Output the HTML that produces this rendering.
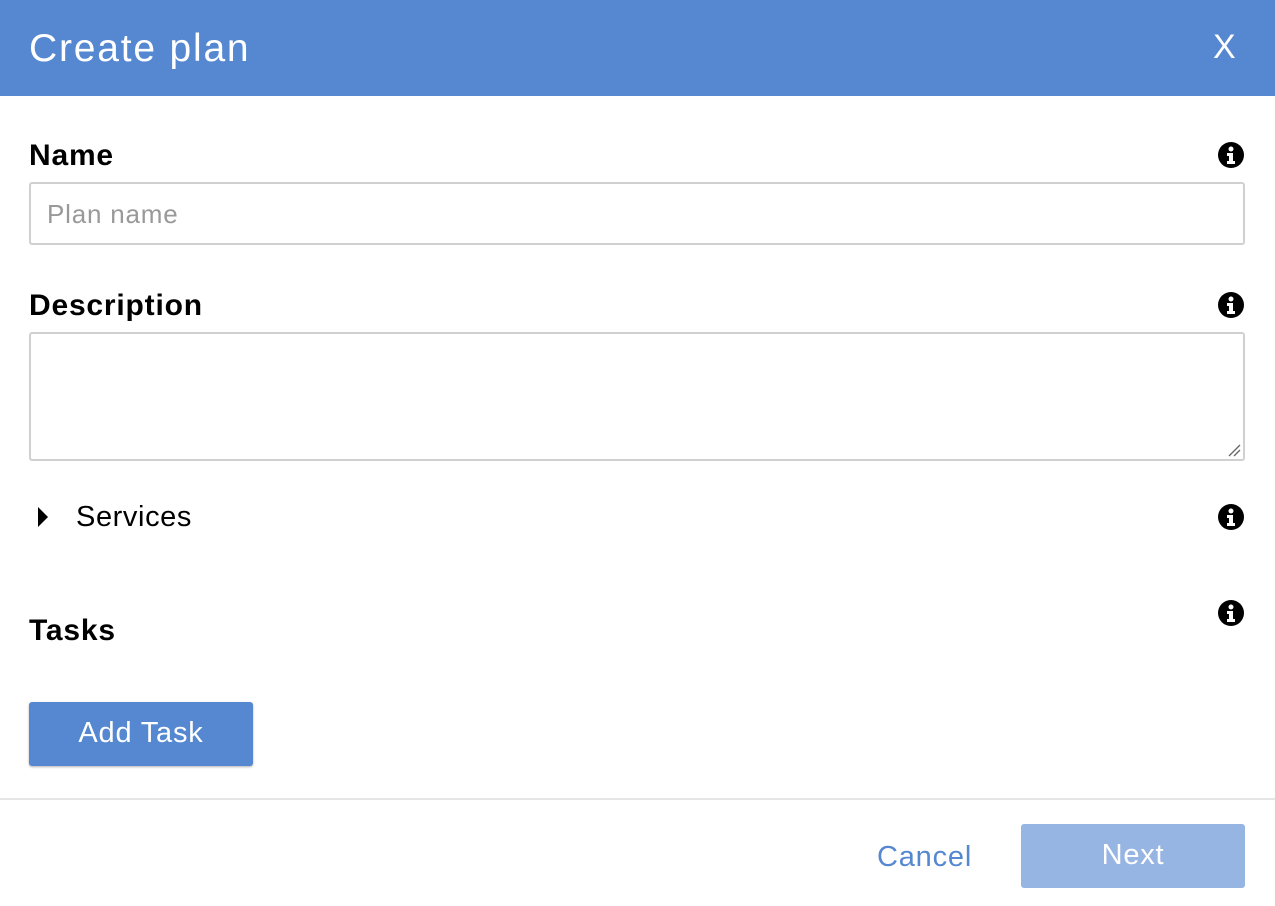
<!DOCTYPE html>
<html><head><style>
*{box-sizing:border-box;margin:0;padding:0}
body{width:1275px;height:906px;background:#fff;font-family:"Liberation Sans",sans-serif;position:relative;overflow:hidden}
.hdr{position:absolute;left:0;top:0;width:1275px;height:96px;background:#5588d0;color:#fff}
.hdr .t{position:absolute;left:29px;top:27px;font-size:39px;letter-spacing:1.8px}
.hdr .x{position:absolute;left:1213px;top:28px;font-size:34px}
.lbl{position:absolute;left:29px;font-size:30px;color:#000;font-weight:600;letter-spacing:0.8px}
.box{position:absolute;left:29px;width:1216px;border:2px solid #d0d0d0;border-radius:3px}
.info{position:absolute;left:1218px;width:26px;height:26px}
.btn{position:absolute;height:64px;width:224px;color:#fff;font-size:29px;text-align:center;line-height:62px;border-radius:3px;letter-spacing:0.8px}
</style></head><body>
<div class="hdr"><div class="t">Create plan</div><div class="x">X</div></div>
<div class="lbl" style="top:139px">Name</div>
<svg class="info" style="top:142px" viewBox="0 0 26 26"><circle cx="13" cy="13" r="13"/><circle cx="13" cy="7" r="2.5" fill="#fff"/><path d="M9 11h6v8h2v3H9v-3h2v-5H9z" fill="#fff"/></svg>
<div class="box" style="top:182px;height:63px"><span style="position:absolute;left:16px;top:15px;font-size:26px;color:#999;letter-spacing:0.8px">Plan name</span></div>
<div class="lbl" style="top:289px">Description</div>
<svg class="info" style="top:292px" viewBox="0 0 26 26"><circle cx="13" cy="13" r="13"/><circle cx="13" cy="7" r="2.5" fill="#fff"/><path d="M9 11h6v8h2v3H9v-3h2v-5H9z" fill="#fff"/></svg>
<div class="box" style="top:332px;height:129px"><svg style="position:absolute;right:2px;bottom:2px" width="14" height="14"><path d="M2 13L13 2M7 13L13 7" stroke="#666" stroke-width="1.3"/></svg></div>
<svg style="position:absolute;left:37px;top:507px" width="12" height="20"><path d="M1 0L11 10L1 20z"/></svg>
<div style="position:absolute;left:76px;top:501px;font-size:29px;letter-spacing:0.6px">Services</div>
<svg class="info" style="top:504px" viewBox="0 0 26 26"><circle cx="13" cy="13" r="13"/><circle cx="13" cy="7" r="2.5" fill="#fff"/><path d="M9 11h6v8h2v3H9v-3h2v-5H9z" fill="#fff"/></svg>
<div class="lbl" style="top:614px">Tasks</div>
<svg class="info" style="top:600px" viewBox="0 0 26 26"><circle cx="13" cy="13" r="13"/><circle cx="13" cy="7" r="2.5" fill="#fff"/><path d="M9 11h6v8h2v3H9v-3h2v-5H9z" fill="#fff"/></svg>
<div class="btn" style="left:29px;top:702px;background:#5588d0;box-shadow:0 1px 2px rgba(0,0,0,.3)">Add Task</div>
<div style="position:absolute;left:0;top:798px;width:1275px;height:2px;background:#e6e6e6"></div>
<div style="position:absolute;left:877px;top:841px;font-size:29px;color:#5588d0;letter-spacing:0.8px">Cancel</div>
<div class="btn" style="left:1021px;top:824px;background:#97b5e3">Next</div>
</body></html>
